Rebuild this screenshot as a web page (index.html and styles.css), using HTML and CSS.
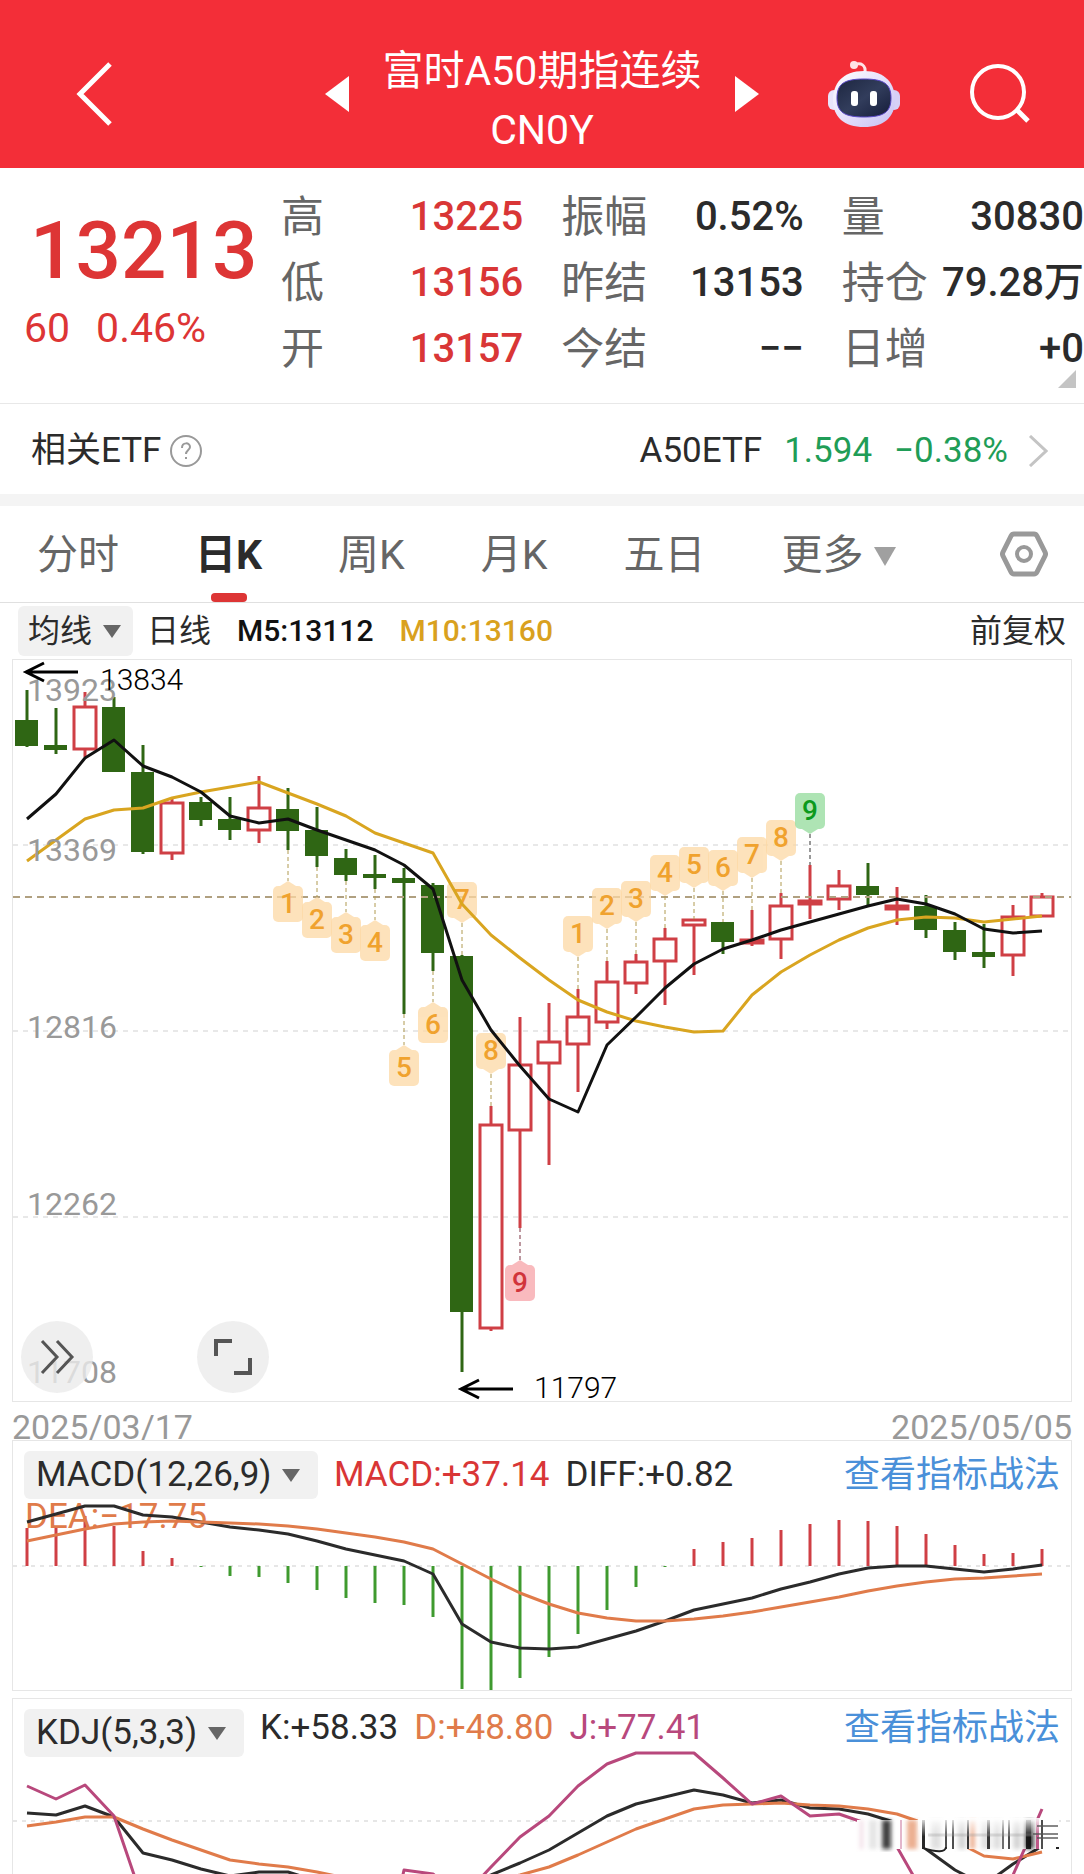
FILE: index.html
```html
<!DOCTYPE html>
<html lang="zh-CN">
<head>
  <meta charset="UTF-8">
  <meta name="viewport" content="width=device-width, initial-scale=1">
  <title>富时A50期指连续</title>
  <link rel="stylesheet" href="styles.css">
</head>
<body>
  <header class="topbar">
    <button class="icon-btn back" aria-label="返回">
      <svg width="36" height="64" viewBox="0 0 36 64"><path d="M34 2 L4 32 L34 62" fill="none" stroke="#fff" stroke-width="5"/></svg>
    </button>
    <div class="switcher">
      <button class="icon-btn" aria-label="上一个">
        <svg width="24" height="36" viewBox="0 0 24 36"><path d="M24 0 V36 L0 18 Z" fill="#fff"/></svg>
      </button>
      <h1 class="title">富时A50期指连续<br>CN0Y</h1>
      <button class="icon-btn" aria-label="下一个">
        <svg width="24" height="36" viewBox="0 0 24 36"><path d="M0 0 V36 L24 18 Z" fill="#fff"/></svg>
      </button>
    </div>
    <div class="actions">
      <button class="icon-btn" aria-label="助手">
        <svg width="72" height="68" viewBox="0 0 72 68">
          <defs>
            <linearGradient id="shell" x1="0" y1="0" x2="1" y2="1">
              <stop offset="0" stop-color="#fff"/>
              <stop offset="0.55" stop-color="#e3dcfa"/>
              <stop offset="1" stop-color="#c4c0f2"/>
            </linearGradient>
            <linearGradient id="face" x1="0" y1="0" x2="1" y2="1">
              <stop offset="0" stop-color="#1d2640"/>
              <stop offset="0.5" stop-color="#323d5c"/>
              <stop offset="1" stop-color="#151c3a"/>
            </linearGradient>
          </defs>
          <path d="M26 5 C33 2 38 5 37 13" fill="none" stroke="#ffe3e6" stroke-width="3"/>
          <circle cx="26" cy="5" r="4" fill="#ffe3e6"/>
          <rect x="0" y="30" width="12" height="20" rx="6" fill="#e9e4fb"/>
          <rect x="60" y="30" width="12" height="20" rx="6" fill="#d6d0f6"/>
          <path d="M36 11 C58 11 67 24 67 40 C67 57 56 67 36 67 C16 67 5 57 5 40 C5 24 14 11 36 11 Z" fill="url(#shell)"/>
          <path d="M36 19 C56 19 63 24 63 38 C63 52 56 57 36 57 C16 57 9 52 9 38 C9 24 16 19 36 19 Z" fill="url(#face)" stroke="#5a48c8" stroke-width="1"/>
          <rect x="23" y="31" width="7" height="15" rx="3" fill="#fff"/>
          <rect x="42" y="31" width="7" height="15" rx="3" fill="#fff"/>
        </svg>
      </button>
      <button class="icon-btn" aria-label="搜索">
        <svg width="60" height="60" viewBox="0 0 60 60"><circle cx="28" cy="28" r="26" fill="none" stroke="#fff" stroke-width="4"/><path d="M47 46 L58 57" stroke="#fff" stroke-width="5"/></svg>
      </button>
    </div>
  </header>

  <section class="quote">
    <div class="price">
      <div class="price-now">13213</div>
      <div class="price-change"><span>60</span><span>0.46%</span></div>
    </div>
    <dl class="stats">
      <div class="stat up"><dt>高</dt><dd>13225</dd></div>
      <div class="stat"><dt>振幅</dt><dd>0.52%</dd></div>
      <div class="stat"><dt>量</dt><dd>30830</dd></div>
      <div class="stat up"><dt>低</dt><dd>13156</dd></div>
      <div class="stat"><dt>昨结</dt><dd>13153</dd></div>
      <div class="stat"><dt>持仓</dt><dd>79.28万</dd></div>
      <div class="stat up"><dt>开</dt><dd>13157</dd></div>
      <div class="stat"><dt>今结</dt><dd>−−</dd></div>
      <div class="stat"><dt>日增</dt><dd>+0</dd></div>
    </dl>
    <svg class="corner" width="18" height="18" viewBox="0 0 18 18"><path d="M18 0 V18 H0 Z" fill="#c4c4c4"/></svg>
  </section>

  <a class="etf" href="#">
    <span>相关ETF</span>
    <svg class="help" width="32" height="32" viewBox="0 0 32 32">
      <circle cx="16" cy="16" r="15" fill="none" stroke="#999" stroke-width="2"/>
      <path d="M12 13 C12 7 20 7 20 12 C20 15 16 15 16 19 M16 22 V24" fill="none" stroke="#999" stroke-width="2"/>
    </svg>
    <span class="etf-name">A50ETF</span>
    <span class="down">1.594</span>
    <span class="down">−0.38%</span>
    <svg width="20" height="32" viewBox="0 0 20 32"><path d="M2 1 L18 16 L2 31" fill="none" stroke="#c4c4c4" stroke-width="3"/></svg>
  </a>

  <nav class="tabs">
    <button class="tab">分时</button>
    <button class="tab active">日K</button>
    <button class="tab">周K</button>
    <button class="tab">月K</button>
    <button class="tab">五日</button>
    <button class="tab">更多<svg width="22" height="19" viewBox="0 0 22 19"><path d="M0 0 H22 L11 19 Z" fill="#a0a0a0"/></svg></button>
    <button class="icon-btn settings" aria-label="设置">
      <svg width="48" height="46" viewBox="0 0 48 46">
        <path d="M14 3 H34 Q36 3 37 5 L45 21 Q46 23 45 25 L37 41 Q36 43 34 43 H14 Q12 43 11 41 L3 25 Q2 23 3 21 L11 5 Q12 3 14 3 Z" fill="none" stroke="#999" stroke-width="5"/>
        <circle cx="24" cy="23" r="7" fill="none" stroke="#999" stroke-width="4"/>
      </svg>
    </button>
  </nav>

  <div class="legend">
    <span class="pill">
      <select aria-label="主图指标"><option>均线</option></select>
      <svg width="18" height="13" viewBox="0 0 18 13"><path d="M0 0 H18 L9 13 Z" fill="#666"/></svg>
    </span>
    <span>日线</span>
    <span class="ma5">M5:13112</span>
    <span class="ma10">M10:13160</span>
    <span class="adjust">前复权</span>
  </div>

  <main class="charts">
    <div class="panel">
      <svg id="kline" class="plot" viewBox="0 0 1058 741"></svg>
      <button class="round-btn more" aria-label="展开">
        <svg width="36" height="36" viewBox="0 0 36 36"><path d="M3 2 L18 18 L3 34 M18 2 L33 18 L18 34" fill="none" stroke="#555" stroke-width="3"/></svg>
      </button>
      <button class="round-btn full" aria-label="全屏">
        <svg width="38" height="38" viewBox="0 0 38 38"><path d="M2 18 V3 H18 M20 35 H36 V20" fill="none" stroke="#555" stroke-width="4"/></svg>
      </button>
    </div>
    <div class="dates"><span>2025/03/17</span><span>2025/05/05</span></div>

    <div class="panel">
      <svg id="macd" class="plot" viewBox="0 0 1058 249"></svg>
      <div class="readout">
        <span class="pill">
          <select aria-label="副图指标一"><option>MACD(12,26,9)</option></select>
          <svg width="18" height="13" viewBox="0 0 18 13"><path d="M0 0 H18 L9 13 Z" fill="#666"/></svg>
        </span>
        <span class="up">MACD:+37.14</span>
        <span>DIFF:+0.82</span>
        <a href="#">查看指标战法</a>
      </div>
    </div>

    <div class="panel last">
      <svg id="kdj" class="plot" viewBox="0 0 1058 177"></svg>
      <div class="readout kdj-row">
        <span class="pill">
          <select aria-label="副图指标二"><option>KDJ(5,3,3)</option></select>
          <svg width="18" height="13" viewBox="0 0 18 13"><path d="M0 0 H18 L9 13 Z" fill="#666"/></svg>
        </span>
        <span>K:+58.33</span>
        <span class="orange">D:+48.80</span>
        <span class="pink">J:+77.41</span>
        <a href="#">查看指标战法</a>
      </div>
    </div>
  </main>

  <script src="chart.js"></script>
</body>
</html>
```
FILE: styles.css
```css
* {
  margin: 0;
  padding: 0;
  box-sizing: border-box;
}

body {
  background: #fff;
  color: #2b2b2b;
  font-family: Roboto, "Noto Sans CJK SC", sans-serif;
  line-height: 1.2;
  overflow-x: hidden;
}

button,
select {
  font: inherit;
  color: inherit;
  background: none;
  border: none;
}

a {
  color: inherit;
  text-decoration: none;
}

svg {
  display: block;
}

.up {
  color: #d93636;
}

.down {
  color: #1f9d57;
}

.orange {
  color: #e07b4a;
}

.pink {
  color: #b8487c;
}

/* header */
.topbar {
  display: grid;
  grid-template-columns: 1fr auto 1fr;
  padding: 42px 54px 8px;
  background: #f32e38;
  color: #fff;
}

.icon-btn {
  display: flex;
  align-items: center;
  height: 104px;
}

.back {
  margin-left: 22px;
}

.switcher {
  display: flex;
  gap: 34px;
}

.title {
  font-size: 41px;
  font-weight: 400;
  line-height: 59px;
  text-align: center;
}

.actions {
  display: flex;
  justify-content: flex-end;
  gap: 70px;
}

/* quote */
.quote {
  position: relative;
  display: flex;
  padding: 16px 0 21px;
  border-bottom: 1px solid #e8e8e8;
}

.price {
  width: 281px;
  color: #dd3535;
}

.price-now {
  padding: 22px 0 0 30px;
  font-size: 80px;
  font-weight: 500;
  line-height: 90px;
}

.price-change {
  display: flex;
  gap: 26px;
  padding-left: 24px;
  font-size: 41px;
  line-height: 64px;
}

.stats {
  flex: 1;
  display: grid;
  grid-template-columns: repeat(3, 1fr);
  column-gap: 38px;
}

.stat {
  display: flex;
  justify-content: space-between;
  font-size: 40px;
  line-height: 66px;
}

.stat dt {
  color: #666;
  font-size: 43px;
}

.stat dd {
  font-weight: 500;
}

.corner {
  position: absolute;
  right: 8px;
  bottom: 15px;
}

.etf {
  display: flex;
  align-items: center;
  height: 102px;
  padding: 4px 36px 0 31px;
  border-bottom: 12px solid #f4f4f4;
  font-size: 35px;
}

.help {
  margin: 0 auto 0 9px;
}

.etf .down {
  margin-left: 22px;
}

.etf .down + .down {
  margin-right: 20px;
}

/* period tabs */
.tabs {
  display: flex;
  align-items: center;
  gap: 76px;
  height: 97px;
  padding: 0 36px 0 37px;
  border-bottom: 1px solid #e0e0e0;
  color: #666;
  font-size: 41px;
}

.tab {
  position: relative;
  display: flex;
  align-items: center;
  gap: 10px;
  height: 96px;
  padding-top: 4px;
}

.tab.active {
  color: #2b2b2b;
  font-weight: 700;
}

.tab.active::after {
  content: "";
  position: absolute;
  left: 50%;
  bottom: 0;
  width: 36px;
  height: 9px;
  margin-left: -18px;
  border-radius: 4px;
  background: #dd3535;
}

.settings {
  height: 96px;
  margin-left: auto;
}

/* indicator line over the chart */
.legend {
  display: flex;
  align-items: center;
  height: 56px;
  padding: 0 18px;
  font-size: 32px;
}

.legend .pill {
  height: 50px;
  margin-right: 14px;
  padding: 0 12px 0 10px;
}

.pill {
  display: flex;
  align-items: center;
  gap: 10px;
  height: 48px;
  padding: 0 18px 0 12px;
  border-radius: 6px;
  background: #f1f1f1;
}

.pill select {
  appearance: none;
}

.ma5,
.ma10 {
  margin-left: 26px;
  font-size: 30px;
  font-weight: 500;
}

.ma5 {
  color: #111;
}

.ma10 {
  color: #d9a11e;
}

.adjust {
  margin-left: auto;
}

/* charts */
.charts {
  padding: 0 12px;
}

.panel {
  position: relative;
  border: 1px solid #e6e6e6;
}

.panel.last {
  border-bottom: none;
}

.plot {
  width: 100%;
  height: auto;
}

#kline {
  overflow: visible;
}

.dates {
  display: flex;
  justify-content: space-between;
  height: 38px;
  color: #999;
  font-size: 34px;
  line-height: 50px;
}

.dates + .panel {
  margin-bottom: 7px;
}

.round-btn {
  position: absolute;
  bottom: 8px;
  display: flex;
  align-items: center;
  justify-content: center;
  width: 72px;
  height: 72px;
  border-radius: 50%;
  background: rgba(235, 235, 235, 0.8);
}

.round-btn.more {
  left: 8px;
}

.round-btn.full {
  left: 184px;
}

/* values drawn over the top of the sub charts */
.readout {
  position: absolute;
  top: 10px;
  left: 11px;
  right: 11px;
  display: flex;
  align-items: center;
  gap: 16px;
  font-size: 35px;
  line-height: 48px;
}

.readout a {
  margin-left: auto;
  color: #4a90d9;
  font-size: 36px;
}

.kdj-row {
  align-items: flex-start;
}

.kdj-row > span + span,
.kdj-row > a {
  line-height: 38px;
}

.axis {
  fill: #999;
  font-size: 32px;
}

.mark {
  fill: #000;
  font-size: 30px;
  font-weight: 300;
}

.dea {
  fill: #e07b4a;
  font-size: 35px;
}

.badge {
  font-size: 28px;
  font-weight: 500;
  text-anchor: middle;
}

.line {
  fill: none;
  stroke-width: 3;
  stroke-linejoin: round;
}
```
FILE: chart.js
```js
var GREEN = "#2f6614";
var RED = "#cf3f45";
var STEP = 29;

// high, body top, body bottom, low, color
var candles = [
  [30, 60, 86, 87, "g"], [48, 85, 90, 94, "g"], [32, 46, 90, 97, "r"], [37, 47, 112, 112, "g"],
  [85, 112, 192, 194, "g"], [139, 142, 194, 200, "r"], [137, 142, 160, 166, "g"], [137, 159, 170, 180, "g"],
  [116, 147, 171, 183, "r"], [128, 149, 171, 190, "g"], [147, 170, 196, 207, "g"], [189, 198, 215, 221, "g"],
  [195, 214, 218, 229, "g"], [208, 218, 223, 354, "g"], [223, 225, 293, 311, "g"], [295, 296, 652, 712, "g"],
  [446, 464, 669, 671, "r"], [357, 404, 471, 568, "r"], [343, 381, 404, 505, "r"], [329, 356, 385, 432, "r"],
  [301, 321, 363, 369, "r"], [294, 301, 324, 334, "r"], [268, 278, 302, 345, "r"], [259, 259, 266, 315, "r"],
  [262, 262, 282, 294, "g"], [250, 279, 284, 286, "r"], [233, 245, 280, 299, "r"], [205, 240, 245, 259, "r"],
  [210, 225, 240, 250, "r"], [203, 226, 235, 246, "g"], [227, 245, 250, 265, "r"], [235, 246, 270, 278, "g"],
  [262, 270, 292, 300, "g"], [264, 292, 297, 308, "g"], [245, 256, 296, 316, "r"], [233, 236, 257, 257, "r"]
];

var ma5 = [159, 134, 98, 80, 106, 117, 132, 156, 163, 159, 170, 180, 190, 205, 229, 320, 370, 406, 439, 452, 385, 357, 328, 304, 289, 280, 270, 262, 254, 246, 239, 244, 254, 269, 273, 271];
var ma10 = [201, 180, 159, 150, 148, 138, 132, 127, 122, 133, 144, 156, 173, 183, 193, 244, 275, 298, 320, 340, 352, 361, 367, 372, 371, 335, 312, 295, 280, 268, 260, 257, 258, 262, 259, 256];

// candle index, number, tip y, side, type
var badges = [
  [9, 1, 221, "below"], [10, 2, 237, "below"], [11, 3, 252, "below"], [12, 4, 260, "below"],
  [13, 5, 385, "below"], [14, 6, 342, "below"], [15, 7, 263, "above"], [16, 8, 414, "above"],
  [17, 9, 600, "below", "buy"],
  [19, 1, 297, "above"], [20, 2, 269, "above"], [21, 3, 262, "above"], [22, 4, 236, "above"],
  [23, 5, 228, "above"], [24, 6, 231, "above"], [25, 7, 218, "above"], [26, 8, 201, "above"],
  [27, 9, 174, "above", "sell"]
];

var macdBars = [87, 85, 75, 85, 110, 117, 126, 135, 136, 142, 149, 157, 162, 164, 176, 248, 249, 237, 216, 193, 169, 146, 126, 108, 101, 97, 89, 83, 79, 80, 85, 93, 104, 113, 112, 108];
var diff = [81, 73, 65, 65, 74, 76, 81, 86, 89, 93, 100, 108, 114, 120, 133, 183, 201, 207, 208, 206, 198, 190, 180, 169, 163, 157, 148, 141, 133, 127, 125, 125, 128, 131, 128, 124];
var dea = [100, 94, 88, 83, 81, 80, 81, 82, 83, 85, 88, 92, 96, 101, 108, 123, 138, 152, 163, 172, 177, 180, 180, 178, 175, 171, 166, 161, 156, 150, 145, 141, 138, 137, 135, 133];

var k = [114, 116, 107, 118, 154, 161, 170, 177, 173, 173, 182, 195, 200, 195, 190, 186, 176, 164, 151, 134, 117, 105, 98, 91, 96, 104, 101, 109, 110, 115, 124, 150, 171, 186, 165, 147];
var d = [127, 123, 118, 118, 130, 141, 151, 161, 165, 168, 173, 179, 185, 188, 188, 187, 183, 176, 168, 156, 143, 130, 120, 110, 106, 105, 104, 106, 107, 110, 115, 125, 142, 157, 160, 153];
var j = [87, 100, 86, 117, 202, 230, 240, 240, 230, 230, 240, 250, 300, 171, 175, 199, 168, 138, 117, 87, 65, 54, 54, 54, 79, 105, 97, 117, 115, 125, 148, 199, 230, 250, 176, 110];

function xAt(i) {
  return 14 + STEP * i;
}

function vline(x, y1, y2, color, width, dash) {
  return '<path d="M' + x + ' ' + y1 + ' V' + y2 + '" stroke="' + color + '" stroke-width="' + width + '"' +
    (dash ? ' stroke-dasharray="' + dash + '"' : '') + '/>';
}

function grid(y, color, width, dash) {
  return '<path d="M0 ' + y + ' H1058" stroke="' + color + '" stroke-width="' + width + '" stroke-dasharray="' + dash + '"/>';
}

function line(values, color) {
  var points = values.map(function (y, i) {
    return xAt(i) + "," + y;
  });
  return '<polyline class="line" stroke="' + color + '" points="' + points.join(" ") + '"/>';
}

function text(cls, x, y, value) {
  return '<text class="' + cls + '" x="' + x + '" y="' + y + '">' + value + '</text>';
}

function drawCandle(c, i) {
  var x = xAt(i);
  if (c[4] === "g") {
    return vline(x, c[0], c[3], GREEN, 3) +
      '<rect x="' + (x - 12) + '" y="' + c[1] + '" width="23" height="' + (c[2] - c[1]) + '" fill="' + GREEN + '"/>';
  }
  return vline(x, c[0], c[1], RED, 3) + vline(x, c[2], c[3], RED, 3) +
    '<rect x="' + (x - 11) + '" y="' + (c[1] + 1) + '" width="22" height="' + (c[2] - c[1] - 2) + '" fill="none" stroke="' + RED + '" stroke-width="3"/>';
}

function drawBadge(b) {
  var x = xAt(b[0]);
  var tip = b[2];
  var below = b[3] === "below";
  var candle = candles[b[0]];
  var fill = "#fdd9a5";
  var color = "#f0a22e";
  var stem = "#b09a50";
  if (b[4] === "buy") {
    fill = "#f7a3a8";
    color = "#d1343b";
    stem = "#7a3040";
  } else if (b[4] === "sell") {
    fill = "#93dc9b";
    color = "#0c9a1c";
    stem = "#333";
  }
  var top = below ? tip + 5 : tip - 41;
  var arrow = below
    ? "M" + (x - 8) + " " + top + " L" + x + " " + tip + " L" + (x + 8) + " " + top + " Z"
    : "M" + (x - 8) + " " + (tip - 5) + " L" + x + " " + tip + " L" + (x + 8) + " " + (tip - 5) + " Z";
  return vline(x, below ? candle[3] : tip, below ? tip : candle[0], stem, 1, "4 3") +
    '<g fill="' + fill + '" opacity="0.75"><rect x="' + (x - 15) + '" y="' + top + '" width="30" height="36" rx="5"/>' +
    '<path d="' + arrow + '"/></g>' +
    '<text class="badge" x="' + x + '" y="' + (top + 27) + '" fill="' + color + '">' + b[1] + '</text>';
}

function arrowLeft(x, y) {
  return '<path d="M' + (x + 52) + ' ' + y + ' H' + x + ' M' + (x + 18) + ' ' + (y - 9) + ' L' + x + ' ' + y + ' L' + (x + 18) + ' ' + (y + 9) + '" fill="none" stroke="#000" stroke-width="3"/>';
}

function drawKline() {
  var out = "";
  [185, 371, 557].forEach(function (y) {
    out += grid(y, "#e8e8e8", 2, "5 5");
  });
  out += candles.map(drawCandle).join("");
  out += grid(237, "#b0a080", 2, "7 5");
  out += badges.map(drawBadge).join("");
  out += line(ma10, "#d9a520") + line(ma5, "#111");
  out += text("axis", 14, 41, "13923") + text("axis", 14, 201, "13369") + text("axis", 14, 378, "12816") +
    text("axis", 14, 555, "12262") + text("axis", 14, 723, "11708");
  out += arrowLeft(13, 12) + text("mark", 87, 30, "13834");
  out += arrowLeft(448, 729) + text("mark", 521, 738, "11797");
  document.getElementById("kline").innerHTML = out;
}

function drawMacd() {
  var out = grid(125, "#e6e6e6", 2, "4 5");
  macdBars.forEach(function (y, i) {
    out += vline(xAt(i), y, 125, y < 125 ? RED : "#3f9a2f", 3);
  });
  out += text("dea", 12, 87, "DEA:−17.75");
  out += line(diff, "#2b2b2b") + line(dea, "#e07b4a");
  document.getElementById("macd").innerHTML = out;
}

// smeared strip in the lower right corner: x, width, color, opacity
function drawSmear() {
  var soft = [
    [847, 3, "#d8a0b8", 0.4], [856, 8, "#999", 0.25], [869, 9, "#111", 0.8], [894, 10, "#e07b4a", 0.6],
    [918, 10, "#999", 0.3], [945, 8, "#999", 0.4], [957, 5, "#e07b4a", 0.6], [968, 9, "#999", 0.3],
    [980, 8, "#999", 0.3], [1000, 8, "#999", 0.4], [1012, 9, "#111", 0.8]
  ];
  var sharp = [
    [887, 2, "#b8487c", 0.4], [909, 3, "#111", 0.9], [932, 2, "#222", 0.8], [939, 2, "#222", 0.8],
    [954, 2, "#222", 0.9], [974, 3, "#222", 0.9], [989, 2, "#333", 0.7], [995, 2, "#222", 0.8],
    [1013, 5, "#111", 0.9], [1023, 3, "#b8487c", 0.9], [1028, 2, "#222", 0.8]
  ];
  function bar(b) {
    return '<rect x="' + b[0] + '" y="121" width="' + b[1] + '" height="29" fill="' + b[2] + '" opacity="' + b[3] + '"/>';
  }
  return '<defs>' +
    '<filter id="blur"><feGaussianBlur stdDeviation="2"/></filter>' +
    '<linearGradient id="fade" x1="0" y1="0" x2="0" y2="1"><stop offset="0" stop-color="#fff" stop-opacity="0.9"/><stop offset="0.6" stop-color="#fff" stop-opacity="0"/></linearGradient>' +
    '</defs>' +
    '<rect x="844" y="121" width="202" height="29" fill="#fff"/>' +
    '<g filter="url(#blur)">' + soft.map(bar).join("") + '</g>' +
    sharp.map(bar).join("") +
    '<rect x="905" y="119" width="122" height="31" fill="url(#fade)"/>' +
    '<path d="M915 136 H1020" stroke="#999" stroke-width="3" opacity="0.3"/>' +
    '<path d="M910 149 Q932 156 933 148" fill="none" stroke="#222" stroke-width="2"/>' +
    '<path d="M1024 127 H1045 M1020 135 H1045 M1024 139 H1045" stroke="#555" stroke-width="2" opacity="0.7"/>' +
    '<path d="M1043 149 H1046" stroke="#222" stroke-width="2"/>';
}

function drawKdj() {
  document.getElementById("kdj").innerHTML = grid(122, "#e6e6e6", 2, "4 5") +
    line(k, "#2b2b2b") + line(d, "#e07b4a") + line(j, "#b8487c") + drawSmear();
}

drawKline();
drawMacd();
drawKdj();
```
